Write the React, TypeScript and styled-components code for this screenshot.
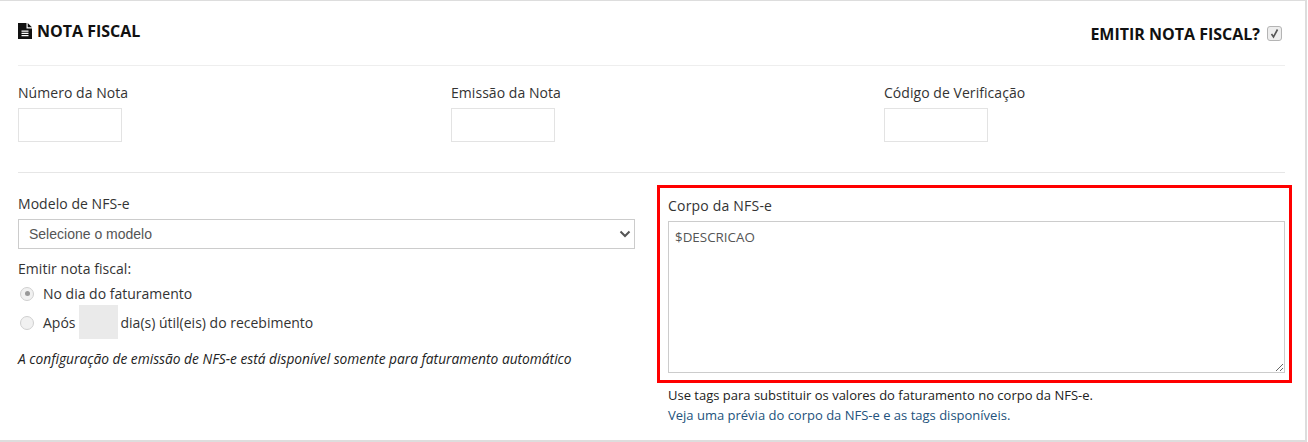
import React from "react";
import styled, { createGlobalStyle } from "styled-components";

const Global = createGlobalStyle`
  html, body { margin: 0; padding: 0; background: #fff; }
  body { font-family: "Open Sans", "Liberation Sans", sans-serif; font-size: 14px; color: #333; }
`;

const Card = styled.section`
  box-sizing: border-box;
  width: 1307px;
  height: 442px;
  padding: 0 20px 0 18px;
  border-top: 1px solid #ddd;
  border-right: 2px solid #ddd;
  border-bottom: 2px solid #ddd;
  background: #fff;
`;

const Header = styled.header`
  display: flex;
  align-items: center;
  justify-content: space-between;
  height: 64px;
  border-bottom: 1px solid #eee;
`;

const Heading = styled.h2`
  display: flex;
  align-items: center;
  gap: 5px;
  margin: 0 0 4px;
  font-size: 16px;
  line-height: 20px;
  font-weight: 700;
  color: #111;
`;

const EmitToggle = styled.label`
  display: flex;
  align-items: center;
  gap: 7px;
  margin: 1px 3px 0 0;
  font-size: 16px;
  line-height: 20px;
  font-weight: 700;
  color: #111;
`;

const FakeCheck = styled.span`
  box-sizing: border-box;
  display: flex;
  align-items: center;
  justify-content: center;
  width: 15px;
  height: 15px;
  border: 1px solid #b4b4b4;
  border-radius: 3px;
  background: #ededed;
`;

const NumbersRow = styled.div`
  display: grid;
  grid-template-columns: repeat(3, 433px);
  height: 107px;
  padding-top: 17px;
  box-sizing: border-box;
  border-bottom: 1px solid #e6e6e6;
`;

const Field = styled.div`
  display: flex;
  flex-direction: column;
  align-items: flex-start;
`;

const Label = styled.label<{ $gap?: number }>`
  font-size: 14px;
  line-height: 20px;
  letter-spacing: 0.05px;
  color: #333;
  margin-bottom: ${(p) => p.$gap ?? 5}px;
`;

const SmallInput = styled.input`
  box-sizing: border-box;
  width: 104px;
  height: 34px;
  border: 1px solid #e3e3e3;
  background: #fff;
  padding: 0;
`;

const Columns = styled.div`
  display: grid;
  grid-template-columns: 617px 635px;
  column-gap: 22px;
  padding-top: 12px;
`;

const LeftColumn = styled.div`
  display: flex;
  flex-direction: column;
  padding-top: 9px;
`;

const SelectBox = styled.div`
  box-sizing: border-box;
  display: flex;
  align-items: center;
  justify-content: space-between;
  height: 30px;
  padding: 0 3px 0 10px;
  border: 1px solid #ccc;
  margin-bottom: 10px;
  font-family: "Liberation Sans", Arial, sans-serif;
  font-size: 14px;
  color: #555;
`;

const RadioRow = styled.div`
  display: flex;
  align-items: center;
  height: 29px;
  font-size: 14px;
  color: #333;
`;

const Radio = styled.span<{ $checked?: boolean }>`
  box-sizing: border-box;
  display: flex;
  align-items: center;
  justify-content: center;
  width: 14px;
  height: 14px;
  margin: 0 9px 0 2px;
  border: 1px solid #d0d0d0;
  border-radius: 50%;
  background: #f1f1f1;
  &::after {
    content: "";
    display: ${(p) => (p.$checked ? "block" : "none")};
    width: 5px;
    height: 5px;
    border-radius: 50%;
    background: #999;
  }
`;

const DaysBox = styled.span`
  flex: none;
  width: 39px;
  height: 34px;
  margin: 0 3px 2px 3px;
  background: #eaeaea;
`;

const Note = styled.p`
  margin: 12px 0 0;
  font-size: 13.75px;
  line-height: 20px;
  font-style: italic;
  color: #222;
`;

const Highlight = styled.div`
  box-sizing: border-box;
  display: flex;
  flex-direction: column;
  height: 198px;
  padding: 8px 7px 7px 8px;
  border: 3px solid #f00;
`;

const BodyLabel = styled(Label)`
  letter-spacing: 0.2px;
`;

const BodyArea = styled.textarea`
  box-sizing: border-box;
  flex: 1;
  width: 617px;
  margin: 0;
  padding: 5px 6px;
  border: 1px solid #ccc;
  outline: none;
  font-family: "Open Sans", sans-serif;
  font-size: 13.4px;
  line-height: 20px;
  color: #555;
  resize: both;
`;

const HelpBlock = styled.div`
  padding: 2px 0 0 11px;
  font-size: 13px;
  line-height: 20px;
  color: #222;
`;

const HelpLink = styled.a`
  display: block;
  color: #23527c;
  text-decoration: none;
`;

export default function App() {
  return (
    <>
      <Global />
      <Card>
        <Header>
          <Heading>
            <svg width="14" height="16" viewBox="0 0 14 16" aria-hidden="true">
              <path fillRule="evenodd" fill="#111" d="M0 0h8.5v5.5H14V16H0zM9.7 0L14 4.3H9.7zM3.5 7.5v1.2h7V7.5zM3.5 9.8V11h7V9.8zM3.5 12.1v1.2h7v-1.2z" />
            </svg>
            NOTA FISCAL
          </Heading>
          <EmitToggle>
            EMITIR NOTA FISCAL?
            <FakeCheck>
              <svg width="11" height="11" viewBox="0 0 11 11" aria-hidden="true">
                <path d="M2.5 6l2 3L8.5 1.5" fill="none" stroke="#555" strokeWidth="1.6" />
              </svg>
            </FakeCheck>
          </EmitToggle>
        </Header>

        <NumbersRow>
          <Field>
            <Label>Número da Nota</Label>
            <SmallInput />
          </Field>
          <Field>
            <Label>Emissão da Nota</Label>
            <SmallInput />
          </Field>
          <Field>
            <Label>Código de Verificação</Label>
            <SmallInput />
          </Field>
        </NumbersRow>

        <Columns>
          <LeftColumn>
            <Label $gap={5}>Modelo de NFS-e</Label>
            <SelectBox>
              Selecione o modelo
              <svg width="12" height="8" viewBox="0 0 12 8" aria-hidden="true">
                <path d="M1.5 1.5L6 6l4.5-4.5" fill="none" stroke="#555" strokeWidth="2" />
              </svg>
            </SelectBox>
            <Label $gap={0}>Emitir nota fiscal:</Label>
            <RadioRow>
              <Radio $checked />
              No dia do faturamento
            </RadioRow>
            <RadioRow>
              <Radio />
              Após
              <DaysBox />
              dia(s) útil(eis) do recebimento
            </RadioRow>
            <Note>A configuração de emissão de NFS-e está disponível somente para faturamento automático</Note>
          </LeftColumn>
          <div>
            <Highlight>
              <BodyLabel $gap={5}>Corpo da NFS-e</BodyLabel>
              <BodyArea defaultValue="$DESCRICAO" />
            </Highlight>
            <HelpBlock>
              Use tags para substituir os valores do faturamento no corpo da NFS-e.
              <HelpLink href="#">Veja uma prévia do corpo da NFS-e e as tags disponíveis.</HelpLink>
            </HelpBlock>
          </div>
        </Columns>
      </Card>
    </>
  );
}
